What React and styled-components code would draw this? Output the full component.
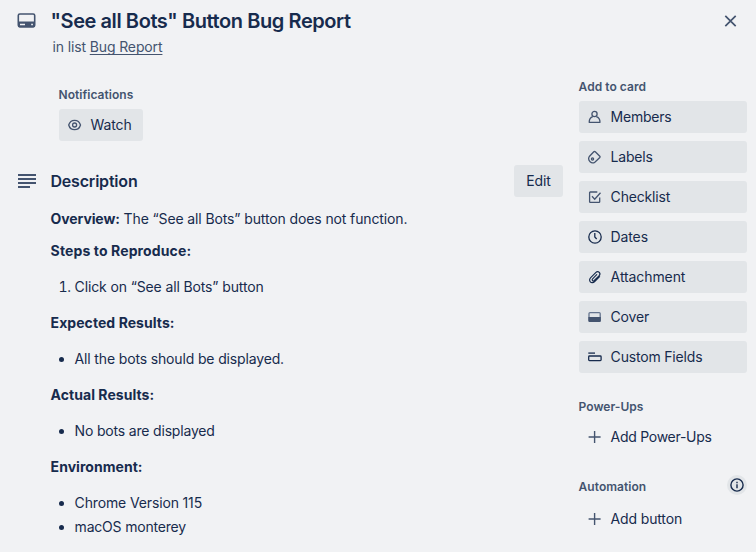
import React from "react";
import styled, { createGlobalStyle } from "styled-components";

const GlobalStyle = createGlobalStyle`
  * { box-sizing: border-box; }
  body {
    margin: 0;
    background: #f1f2f4;
    color: #172b4d;
    font: 400 14px/20px Inter, "Liberation Sans", sans-serif;
  }
  h2, h3, h4, p, ul, ol { margin: 0; padding: 0; font-size: inherit; }
`;

const Card = styled.div`
  display: flex;
  flex-direction: column;
  width: 756px;
  height: 552px;
  overflow: hidden;
`;

const Header = styled.header`
  display: flex;
  align-items: flex-start;
  height: 77px;
  padding: 9px 9px 0 17px;
`;

const HeaderText = styled.div`
  flex: 1;
  padding-left: 13.5px;
`;

const Title = styled.h2`
  font-size: 20px;
  font-weight: 600;
  line-height: 24px;
  letter-spacing: -0.42px;
  white-space: nowrap;
`;

const ListName = styled.p`
  margin: 4px 0 0 2px;
  color: #44546f;
  letter-spacing: -0.13px;
  a {
    color: inherit;
    text-decoration: underline;
    text-underline-offset: 2px;
    text-decoration-skip-ink: none;
  }
`;

const CloseButton = styled.button`
  display: flex;
  margin-top: 4px;
  padding: 0;
  border: 0;
  background: none;
`;

const Columns = styled.div`
  display: flex;
  gap: 16px;
  padding: 0 9px 0 17px;
`;

const Main = styled.main`
  width: 546px;
`;

const Notifications = styled.section`
  padding: 8px 0 0 42px;
`;

const Sidebar = styled.aside`
  display: flex;
  flex-direction: column;
  gap: 24px;
  width: 168px;
`;

const SmallHeading = styled.h3`
  height: 20px;
  color: #44546f;
  font-size: 12px;
  font-weight: 600;
  line-height: 20px;
  white-space: nowrap;
  letter-spacing: 0.03px;
  text-indent: -0.4px;
`;

const HeadingRow = styled.div`
  display: flex;
  justify-content: space-between;
  margin-bottom: ${(p) => p.$gap || 0}px;
`;

const InfoBadge = styled.span`
  display: flex;
  align-items: center;
  justify-content: center;
  width: 20px;
  height: 20px;
  margin-top: -2px;
  border-radius: 50%;
  background: #e2e5e8;
`;

const ButtonStack = styled.div`
  display: flex;
  flex-direction: column;
  gap: 8px;
  margin-top: 4px;
`;

const ActionButton = styled.button`
  display: flex;
  align-items: center;
  gap: 7.6px;
  width: ${(p) => p.$width || "100%"};
  height: 32px;
  padding: 0 8px;
  border: 0;
  border-radius: 3px;
  background: ${(p) => (p.$plain ? "transparent" : "#e2e5e8")};
  color: #172b4d;
  font: inherit;
  white-space: nowrap;
  letter-spacing: ${(p) => p.$track || 0}px;
`;

const WatchButton = styled(ActionButton)`
  margin-top: 4px;
`;

const EditButton = styled(ActionButton)`
  justify-content: center;
`;

const DescriptionHeader = styled.div`
  display: flex;
  align-items: center;
  margin-top: 24px;
`;

const DescriptionTitle = styled.h3`
  flex: 1;
  padding-left: 13.5px;
  font-size: 16px;
  font-weight: 600;
  letter-spacing: -0.2px;
`;

const Description = styled.div`
  padding: 10px 0 0 33.6px;
  line-height: 24px;
`;

const Paragraph = styled.p`
  letter-spacing: ${(p) => p.$track || 0}px;
  & + & { margin-top: 8px; }
`;

const Strong = styled.strong`
  font-weight: 700;
  letter-spacing: ${(p) => p.$track || 0}px;
`;

const List = styled.ul`
  margin: 12px 0;
  padding-left: 24px;
  list-style: ${(p) => p.$marker || "disc"};
`;

const Item = styled.li`
  letter-spacing: ${(p) => p.$track || 0}px;
`;

const Svg = styled.svg`
  display: block;
  flex: none;
  fill: none;
  stroke: ${(p) => p.$color || "#44546f"};
  stroke-width: ${(p) => p.$weight || 1.3};
`;

const CardIcon = () => (
  <Svg width="20" height="24" viewBox="0 0 20 24" $weight={1.6}>
    <rect x="1.3" y="5" width="16.4" height="12.8" rx="1.6" />
    <path fill="#44546f" stroke="none" fillRule="evenodd" d="M1 12.6h17v4.2q0 1.7-1.7 1.7H2.7Q1 18.500 1 16.800ZM3 14.800v1.500h5v-1.500ZM14.200 14.800v1.500h1.700v-1.500Z" />
  </Svg>
);

const CloseIcon = () => (
  <Svg width="33" height="16" viewBox="0 0 33 16" $weight={1.7}>
    <path d="M11.300 2.800 21.700 13.200M21.700 2.800 11.300 13.200" />
  </Svg>
);

const TextIcon = () => (
  <Svg width="20" height="20" viewBox="0 0 20 20" $weight={1.9}>
    <path d="M1 4h18M1 8h18M1 12h18M1 16h12" />
  </Svg>
);

const EyeIcon = () => (
  <Svg width="16" height="16" viewBox="0 0 16 16">
    <path d="M1.700 8C2.500 5.200 4.700 3.300 7.600 3.300S12.700 5.200 13.500 8C12.700 10.800 10.500 12.700 7.600 12.700S2.500 10.800 1.700 8Z" />
    <circle cx="7.600" cy="8" r="2" />
  </Svg>
);

const MemberIcon = () => (
  <Svg width="16" height="16" viewBox="0 0 16 16">
    <circle cx="7.500" cy="5" r="2.600" />
    <path d="M5.800 7.700C3.500 8.400 2.200 10.500 2.200 13.300H13C13 10.500 11.700 8.400 9.300 7.700" strokeLinejoin="round" />
  </Svg>
);

const LabelIcon = () => (
  <Svg width="16" height="16" viewBox="0 0 16 16">
    <path d="M2.300 7.500 6.800 2.800Q7.500 2.100 8.300 2.800L12.800 7.200Q13.300 7.800 12.800 8.500L8.100 12.900C6.500 14.200 4.500 14.100 3.100 12.700C1.600 11.200 1.300 9.200 2.300 7.500Z" />
    <circle cx="5.500" cy="10" r="1.100" />
  </Svg>
);

const CheckIcon = () => (
  <Svg width="16" height="16" viewBox="0 0 16 16">
    <path d="M10.300 3H3.300Q2.600 3 2.600 3.700V12.700Q2.600 13.400 3.300 13.400H12Q12.700 13.400 12.700 12.700V8.500M5 7.300 7.700 10.200 13.500 3.800" />
  </Svg>
);

const ClockIcon = () => (
  <Svg width="16" height="16" viewBox="0 0 16 16" $color="#172b4d">
    <circle cx="8" cy="8" r="6.200" />
    <path d="M7.800 4V8L9.700 10" />
  </Svg>
);

const ClipIcon = () => (
  <Svg width="16" height="16" viewBox="0 0 16 16" $color="#172b4d" $weight={1.15}>
    <path d="M12.600 7.700 7.700 12.500C6.300 13.900 4.400 14 3.300 12.800C2.200 11.700 2.400 9.900 3.700 8.600L8.700 3.600C9.700 2.600 11.300 2.400 12.300 3.400C13.200 4.400 13 5.900 12 6.900L7.300 11.500C6.800 12 6 12.100 5.500 11.600C5 11.100 5.100 10.300 5.600 9.800L9.700 5.700" strokeLinecap="round" />
  </Svg>
);

const CoverIcon = () => (
  <Svg width="16" height="16" viewBox="0 0 16 16">
    <rect x="2" y="3.600" width="11.200" height="8.800" rx="1" stroke="#66758f" />
    <path d="M1.400 8h12.400v3.500q0 1.500-1.500 1.500H2.900q-1.500 0-1.500-1.500Z" fill="#44546f" stroke="none" />
  </Svg>
);

const FieldsIcon = () => (
  <Svg width="16" height="16" viewBox="0 0 16 16" $color="#172b4d">
    <path d="M1.300 4.100H8" />
    <rect x="1.700" y="7" width="12.400" height="4.600" rx="0.800" />
  </Svg>
);

const PlusIcon = () => (
  <Svg width="16" height="16" viewBox="0 0 16 16" $weight={1.4}>
    <path d="M7.600 2V14M1.600 8H13.600" />
  </Svg>
);

const InfoIcon = () => (
  <Svg width="16" height="16" viewBox="0 0 16 16" $color="#172b4d" $weight={1.4}>
    <circle cx="8" cy="8" r="6.100" />
    <path d="M8 7.200V11.200M8 4.800V6.200" />
  </Svg>
);

const cardActions = [
  { label: "Members", Icon: MemberIcon, track: -0.22 },
  { label: "Labels", Icon: LabelIcon, track: -0.2 },
  { label: "Checklist", Icon: CheckIcon, track: -0.17 },
  { label: "Dates", Icon: ClockIcon, track: -0.13 },
  { label: "Attachment", Icon: ClipIcon, track: -0.1 },
  { label: "Cover", Icon: CoverIcon, track: -0.2 },
  { label: "Custom Fields", Icon: FieldsIcon, track: -0.18 },
];

export default function App() {
  return (
    <>
      <GlobalStyle />
      <Card>
        <Header>
          <CardIcon />
          <HeaderText>
            <Title>"See all Bots" Button Bug Report</Title>
            <ListName>in list <a>Bug Report</a></ListName>
          </HeaderText>
          <CloseButton aria-label="Close"><CloseIcon /></CloseButton>
        </Header>
        <Columns>
          <Main>
            <Notifications>
              <SmallHeading>Notifications</SmallHeading>
              <WatchButton $width="84px" $track={-0.15}><EyeIcon />Watch</WatchButton>
            </Notifications>
            <DescriptionHeader>
              <TextIcon />
              <DescriptionTitle>Description</DescriptionTitle>
              <EditButton $width="49px" $track={-0.1}>Edit</EditButton>
            </DescriptionHeader>
            <Description>
              <Paragraph $track={-0.12}><Strong $track={-0.1}>Overview:</Strong> The “See all Bots” button does not function.</Paragraph>
              <Paragraph><Strong $track={0.12}>Steps to Reproduce:</Strong></Paragraph>
              <List as="ol" $marker="decimal"><Item $track={-0.13}>Click on “See all Bots” button</Item></List>
              <Paragraph><Strong $track={0.06}>Expected Results:</Strong></Paragraph>
              <List><Item $track={-0.15}>All the bots should be displayed.</Item></List>
              <Paragraph><Strong $track={0.04}>Actual Results:</Strong></Paragraph>
              <List><Item $track={-0.18}>No bots are displayed</Item></List>
              <Paragraph><Strong $track={0.04}>Environment:</Strong></Paragraph>
              <List><Item $track={-0.14}>Chrome Version 115</Item><Item $track={-0.2}>macOS monterey</Item></List>
            </Description>
          </Main>
          <Sidebar>
            <section>
              <SmallHeading>Add to card</SmallHeading>
              <ButtonStack>
                {cardActions.map(({ label, Icon, track }) => (
                  <ActionButton key={label} $track={track}><Icon />{label}</ActionButton>
                ))}
              </ButtonStack>
            </section>
            <section>
              <SmallHeading>Power-Ups</SmallHeading>
              <ButtonStack>
                <ActionButton $plain $track={-0.28}><PlusIcon />Add Power-Ups</ActionButton>
              </ButtonStack>
            </section>
            <section>
              <HeadingRow $gap={6}>
                <SmallHeading>Automation</SmallHeading>
                <InfoBadge><InfoIcon /></InfoBadge>
              </HeadingRow>
              <ActionButton $plain $track={-0.15}><PlusIcon />Add button</ActionButton>
            </section>
          </Sidebar>
        </Columns>
      </Card>
    </>
  );
}
